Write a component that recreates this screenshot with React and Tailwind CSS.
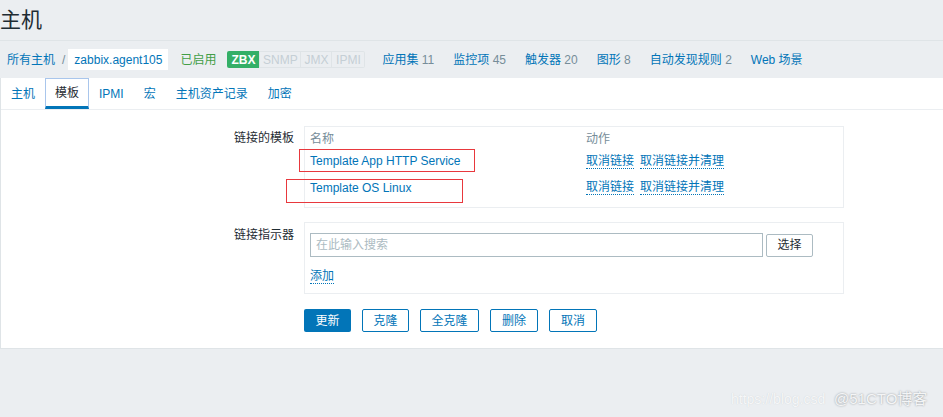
import React from 'react';

const font = { fontFamily: '"Liberation Sans", Arial, "Noto Sans CJK SC", sans-serif' };

const navLinks = [
  { label: '应用集', count: '11' },
  { label: '监控项', count: '45' },
  { label: '触发器', count: '20' },
  { label: '图形', count: '8' },
  { label: '自动发现规则', count: '2' },
  { label: 'Web 场景', count: '' },
];

const tabs = ['主机', '模板', 'IPMI', '宏', '主机资产记录', '加密'];

const templates = ['Template App HTTP Service', 'Template OS Linux'];

const ActionLink = ({ children }) => (
  <span className="text-[#0275b8] border-b border-dotted border-[#0275b8] leading-[14px]">{children}</span>
);

export default function App() {
  return (
    <div className="relative w-[943px] h-[417px] bg-[#ebeef1] text-[12px] text-[#1f2c33] overflow-hidden" style={font}>
      <header className="h-[41px] flex items-center border-b border-[#dfe4e7]">
        <h1 className="text-[21px] leading-none -mt-[2px]">主机</h1>
      </header>

      <nav className="h-[37px] flex items-center pl-[7px]">
        <span className="text-[#0275b8]">所有主机</span>
        <span className="ml-[7px] text-[#768d99]">/</span>
        <span className="ml-[3px] h-[21px] bg-white px-[6px] flex items-center text-[#0275b8]">zabbix.agent105</span>
        <span className="ml-[12px] text-[#429e47]">已启用</span>
        <div className="ml-[11px] flex items-center h-[17px]">
          <span className="h-full w-[32px] justify-center flex items-center bg-[#34af67] text-white rounded-l-[2px] font-bold">ZBX</span>
          <span className="h-full w-[42px] justify-center flex items-center border border-[#dfe4e7] text-[#c5cfd5]">SNMP</span>
          <span className="h-full w-[31px] justify-center flex items-center border border-l-0 border-[#dfe4e7] text-[#c5cfd5]">JMX</span>
          <span className="h-full w-[33px] justify-center flex items-center border border-l-0 border-[#dfe4e7] text-[#c5cfd5] rounded-r-[2px]">IPMI</span>
        </div>
        <div className="ml-[17px] flex items-center gap-[19px]">
          {navLinks.map(l => (
            <span key={l.label}>
              <span className="text-[#0275b8]">{l.label}</span>
              {l.count && <span className="text-[#768d99]"> {l.count}</span>}
            </span>
          ))}
        </div>
      </nav>

      <div className="bg-white border-l border-[#dfe4e7] border-b">
        <div className="h-[32px] flex items-stretch border-b border-[#ebeef1]">
          {tabs.map(t => (
            t === '模板' ? (
              <span key={t} className="px-[9px] flex items-center border border-[#a9c6ec] border-b-[3px] border-b-[#0275b8] text-[#1f2c33]">{t}</span>
            ) : (
              <span key={t} className="px-[10px] flex items-center text-[#0275b8]">{t}</span>
            )
          ))}
        </div>

        <div className="pt-[16px] pb-[16px]">
          <div className="flex">
            <div className="w-[293px] text-right pt-[3px]">链接的模板</div>
            <div className="ml-[10px] w-[540px] border border-[#ebeef1] pt-[1px] pb-[4px] pl-[5px]">
              <div className="h-[22px] flex items-center text-[#768d99]">
                <span className="w-[276px]">名称</span>
                <span>动作</span>
              </div>
              {templates.map((t, i) => (
                <div key={t} className={`flex items-center ${i === 0 ? 'h-[22px]' : 'h-[31px]'}`}>
                  <span className="w-[276px] text-[#0275b8]">{t}</span>
                  <div className="flex gap-[6px]">
                    <ActionLink>取消链接</ActionLink>
                    <ActionLink>取消链接并清理</ActionLink>
                  </div>
                </div>
              ))}
            </div>
          </div>

          <div className="flex mt-[14px]">
            <div className="w-[293px] text-right pt-[4px]">链接指示器</div>
            <div className="ml-[10px] w-[540px] h-[72px] border border-[#ebeef1] pt-[10px] pl-[5px]">
              <div className="flex items-center gap-[3px]">
                <div className="w-[453px] h-[24px] border border-[#acbbc2] flex items-center pl-[5px] text-[#acbbc2]">在此输入搜索</div>
                <button className="w-[47px] h-[23px] border border-[#acbbc2] rounded-[2px] bg-white text-[#1f2c33]">选择</button>
              </div>
              <div className="mt-[12px] flex">
                <ActionLink>添加</ActionLink>
              </div>
            </div>
          </div>

          <div className="flex ml-[303px] mt-[15px] gap-[11px]">
            <button className="w-[47px] h-[23px] rounded-[2px] bg-[#0275b8] text-white">更新</button>
            <button className="w-[47px] h-[23px] rounded-[2px] border border-[#0275b8] text-[#0275b8] bg-white">克隆</button>
            <button className="w-[59px] h-[23px] rounded-[2px] border border-[#0275b8] text-[#0275b8] bg-white">全克隆</button>
            <button className="w-[48px] h-[23px] rounded-[2px] border border-[#0275b8] text-[#0275b8] bg-white">删除</button>
            <button className="w-[48px] h-[23px] rounded-[2px] border border-[#0275b8] text-[#0275b8] bg-white">取消</button>
          </div>
        </div>
      </div>

      {/* red annotation boxes */}
      <div className="absolute left-[299px] top-[149px] w-[176px] h-[23px] border border-[#e8383d]" />
      <div className="absolute left-[286px] top-[179px] w-[177px] h-[24px] border border-[#e8383d]" />

      {/* watermark */}
      <div className="absolute left-[731px] top-[389px] text-[14px] text-[#f6f7f8] [text-shadow:0_0_1px_#c8cdd1]">https://blog.csd</div>
      <div className="absolute left-[834px] top-[388px] text-[15px] text-[#f4f5f6] [text-shadow:0_0_2px_#8a8f93]">@51CTO博客</div>
    </div>
  );
}
